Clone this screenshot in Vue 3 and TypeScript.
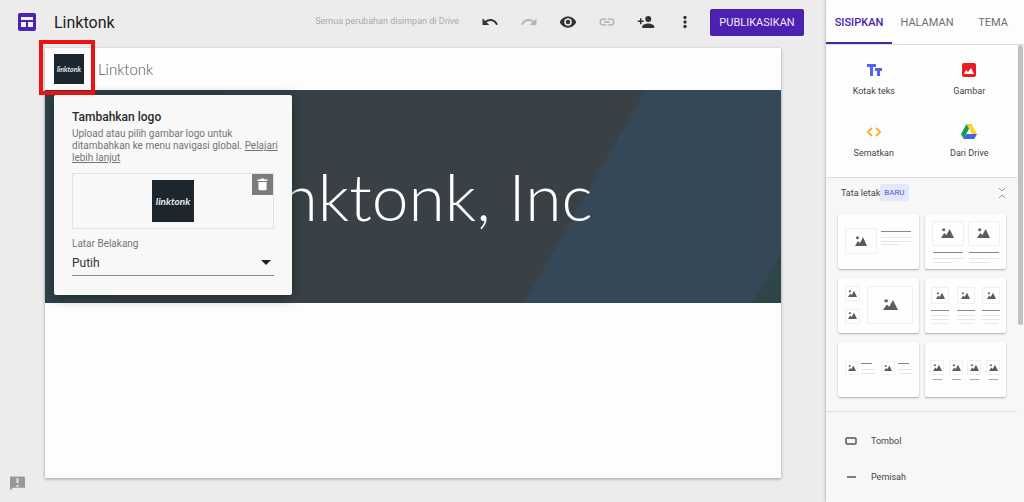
<script setup lang="ts">
import { ref } from 'vue'

type Box = [x: number, y: number, w: number, h: number]
type Stroke = [x: number, y: number, w: number]

interface LayoutTile {
  name: string
  frames: Box[]
  photos: Box[]
  heads: Stroke[]
  lines: Stroke[]
}

const siteName = ref('Linktonk')
const background = ref('Putih')
const tabs = ['SISIPKAN', 'HALAMAN', 'TEMA']
const activeTab = ref('SISIPKAN')

const layouts: LayoutTile[] = [
  {
    name: 'Gambar dan teks',
    frames: [[7, 14, 32, 26]],
    photos: [[17, 22, 12, 10]],
    heads: [[43, 17, 30]],
    lines: [[43, 23, 31], [43, 27, 31], [43, 30, 19]],
  },
  {
    name: 'Dua gambar',
    frames: [[7, 7, 32, 25], [43, 7, 32, 25]],
    photos: [[16, 14, 13, 10], [52, 14, 13, 10]],
    heads: [[8, 38, 30], [44, 38, 30]],
    lines: [[8, 44, 30], [44, 44, 30], [8, 48, 20], [44, 48, 20]],
  },
  {
    name: 'Kolase',
    frames: [[7, 8, 15, 15], [7, 31, 15, 15], [29, 8, 46, 38]],
    photos: [[10, 12, 9, 7], [10, 34, 9, 7], [45, 21, 15, 11]],
    heads: [],
    lines: [],
  },
  {
    name: 'Tiga gambar',
    frames: [[6, 9, 18, 17], [32, 9, 18, 17], [57, 9, 18, 17]],
    photos: [[11, 14, 9, 7], [36, 14, 9, 7], [62, 14, 9, 7]],
    heads: [[6, 32, 18], [32, 32, 18], [57, 32, 18]],
    lines: [[6, 37, 18], [32, 37, 18], [57, 37, 18], [6, 41, 18], [32, 41, 18], [57, 41, 18], [8, 45, 14], [34, 45, 14], [59, 45, 14]],
  },
  {
    name: 'Dua baris',
    frames: [[7, 19, 13, 14], [43, 19, 14, 14]],
    photos: [[10, 23, 8, 6], [46, 23, 8, 6]],
    heads: [[23, 21, 11], [60, 21, 11]],
    lines: [[23, 27, 14], [60, 27, 14], [23, 31, 14], [60, 31, 14]],
  },
  {
    name: 'Empat gambar',
    frames: [[5, 18, 14, 15], [24, 18, 14, 15], [42, 18, 14, 15], [61, 18, 14, 15]],
    photos: [[8, 22, 9, 7], [27, 22, 9, 7], [45, 22, 9, 7], [64, 22, 9, 7]],
    heads: [],
    lines: [[8, 37, 9], [27, 37, 9], [45, 37, 9], [64, 37, 9]],
  },
]
</script>

<template>
  <div class="app">
    <div class="workspace">
      <header class="topbar">
        <svg class="sites-logo" viewBox="0 0 18 18" aria-hidden="true">
          <rect width="18" height="18" rx="2" fill="#4a25ad" />
          <path d="M3 4h12v3H3zM3 9h5v5H3zM10 9h5v5h-5z" fill="#f3f0fa" />
        </svg>
        <input v-model="siteName" class="doc-title" aria-label="Nama situs" />
        <span class="saved">Semua perubahan disimpan di Drive</span>
        <button class="tool" aria-label="Urungkan">
          <svg viewBox="0 0 24 24"><path d="M12.500 8c-2.650 0-5.050.990-6.900 2.600L2 7v9h9l-3.620-3.620c1.390-1.160 3.160-1.880 5.120-1.880 3.540 0 6.550 2.310 7.600 5.500l2.370-.780C21.080 11.030 17.150 8 12.500 8z" /></svg>
        </button>
        <button class="tool faint" aria-label="Ulangi">
          <svg viewBox="0 0 24 24"><path d="M18.400 10.600C16.550 8.990 14.150 8 11.500 8c-4.650 0-8.580 3.030-9.960 7.220L3.900 16c1.050-3.190 4.050-5.500 7.600-5.500 1.950 0 3.730.720 5.120 1.880L13 16h9V7l-3.600 3.600z" /></svg>
        </button>
        <button class="tool" aria-label="Pratinjau">
          <svg viewBox="0 0 24 24"><path d="M12 4.500C7 4.500 2.730 7.610 1 12c1.730 4.390 6 7.500 11 7.500s9.270-3.110 11-7.500c-1.730-4.390-6-7.500-11-7.500zM12 17a5 5 0 1 1 0-10 5 5 0 0 1 0 10zm0-8a3 3 0 1 0 0 6 3 3 0 0 0 0-6z" /></svg>
        </button>
        <button class="tool faint" aria-label="Salin tautan">
          <svg viewBox="0 0 24 24"><path d="M3.900 12c0-1.710 1.390-3.100 3.100-3.100h4V7H7a5 5 0 0 0 0 10h4v-1.900H7c-1.710 0-3.100-1.390-3.100-3.100zM8 13h8v-2H8v2zm9-6h-4v1.900h4a3.100 3.100 0 0 1 0 6.200h-4V17h4a5 5 0 0 0 0-10z" /></svg>
        </button>
        <button class="tool" aria-label="Bagikan">
          <svg viewBox="0 0 24 24"><path d="M15 12a4 4 0 1 0 0-8 4 4 0 0 0 0 8zm-9-2V7H4v3H1v2h3v3h2v-3h3v-2H6zm9 4c-2.670 0-8 1.340-8 4v2h16v-2c0-2.660-5.330-4-8-4z" /></svg>
        </button>
        <button class="tool" aria-label="Lainnya">
          <svg viewBox="0 0 24 24"><circle cx="12" cy="6" r="2.200" /><circle cx="12" cy="12" r="2.200" /><circle cx="12" cy="18" r="2.200" /></svg>
        </button>
        <button class="publish">PUBLIKASIKAN</button>
      </header>

      <main class="page">
        <div class="site-nav">
          <div class="brand-mark">
            <span class="logo logo-small">linktonk</span>
            <span class="highlight"></span>
            <section class="popover" aria-labelledby="logo-heading">
              <h2 id="logo-heading">Tambahkan logo</h2>
              <p>
                Upload atau pilih gambar logo untuk ditambahkan ke menu navigasi global.
                <a href="#">Pelajari lebih lanjut</a>
              </p>
              <div class="preview">
                <span class="logo logo-large">linktonk</span>
                <button class="remove" aria-label="Hapus logo">
                  <svg viewBox="0 0 24 24"><path d="M5.500 8h13v11.500A1.800 1.800 0 0 1 16.700 21H7.300a1.800 1.800 0 0 1-1.800-1.500zM4 4h4.500l1-1.500h5l1 1.500H20v2.500H4z" /></svg>
                </button>
              </div>
              <label for="logo-bg">Latar Belakang</label>
              <div class="select-wrap">
                <select id="logo-bg" v-model="background">
                  <option>Putih</option>
                  <option>Transparan</option>
                  <option>Hitam</option>
                </select>
                <svg class="caret" viewBox="0 0 10 5" aria-hidden="true"><path d="M0 0h10L5 5z" /></svg>
              </div>
            </section>
          </div>
          <span class="site-name">{{ siteName }}</span>
        </div>
        <div class="banner">
          <svg class="banner-art" viewBox="0 0 736 213" preserveAspectRatio="none" aria-hidden="true">
            <rect width="736" height="213" fill="#394147" />
            <path d="M0 0h180L58 213H0z" fill="#314148" />
            <path d="M601 0h135v213H479z" fill="#344857" />
            <path d="M736 164v49h-29z" fill="#2f4648" />
          </svg>
          <h1>Linktonk, Inc</h1>
        </div>
      </main>

      <button class="feedback" aria-label="Laporkan masalah">
        <svg viewBox="0 0 16 15"><path d="M1 0h14a1 1 0 0 1 1 1v11H3l-3 3V1a1 1 0 0 1 1-1z" fill="#999" /><path d="M7 2h2v5H7zM7 9h2v2H7z" fill="#ececec" /></svg>
      </button>
    </div>

    <aside class="sidebar">
      <nav class="tabs">
        <button v-for="tab in tabs" :key="tab" :class="{ active: tab === activeTab }" @click="activeTab = tab">{{ tab }}</button>
      </nav>
      <div class="scroll">
        <div class="inserts">
          <button>
            <svg viewBox="0 0 16 16"><path d="M1 2h9v3H7v9H4V5H1zM9 6h7v3h-2v5h-3V9H9z" fill="#5561f0" /></svg>
            <span>Kotak teks</span>
          </button>
          <button>
            <svg viewBox="0 0 16 16"><rect x="1" y="1" width="14" height="14" rx="2" fill="#ed1c24" /><path d="M3 12l2-4 2 2 3-4 3 6z" fill="#fff" /></svg>
            <span>Gambar</span>
          </button>
          <button>
            <svg viewBox="0 0 16 16"><path d="M6 4L2 8l4 4M10 4l4 4-4 4" fill="none" stroke="#f5b32e" stroke-width="2" /></svg>
            <span>Sematkan</span>
          </button>
          <button>
            <svg viewBox="0 0 16 16"><path d="M5.500 0h5L16 10h-5z" fill="#fbd51d" /><path d="M5.500 0L8 4.700 2.700 15 0 10z" fill="#159d58" /><path d="M5.300 10H16l-2.700 5H2.700z" fill="#4664df" /></svg>
            <span>Dari Drive</span>
          </button>
        </div>

        <section class="layouts">
          <div class="layouts-head">
            <span>Tata letak</span>
            <span class="badge">BARU</span>
            <button class="collapse" aria-label="Ciutkan">
              <svg viewBox="0 0 8 12"><path d="M1 1l3 3 3-3M1 11l3-3 3 3" fill="none" stroke="#999" /></svg>
            </button>
          </div>
          <div class="tiles">
            <button v-for="tile in layouts" :key="tile.name" class="tile" :aria-label="tile.name">
              <svg class="tile-art" viewBox="0 0 81 55">
                <rect v-for="(f, i) in tile.frames" :key="'f' + i" :x="f[0] + 0.5" :y="f[1] + 0.5" :width="f[2] - 1" :height="f[3] - 1" fill="none" stroke="#f0f0f0" />
                <svg v-for="(p, i) in tile.photos" :key="'p' + i" :x="p[0]" :y="p[1]" :width="p[2]" :height="p[3]" viewBox="0 0 12 10" preserveAspectRatio="none">
                  <circle cx="2.500" cy="1.700" r="1.500" fill="#666" />
                  <path d="M0 10l3-5 2 2 3-6 4 9z" fill="#5c5c5c" />
                </svg>
                <rect v-for="(h, i) in tile.heads" :key="'h' + i" :x="h[0]" :y="h[1]" :width="h[2]" height="1" fill="#888" />
                <rect v-for="(l, i) in tile.lines" :key="'l' + i" :x="l[0]" :y="l[1]" :width="l[2]" height="1" :fill="tile.heads.length ? '#e6e6e6' : '#aaa'" />
              </svg>
            </button>
          </div>
        </section>

        <div class="components">
          <button>
            <svg viewBox="0 0 12 12"><rect x="1" y="3" width="10" height="6" rx="1" fill="none" stroke="#555" stroke-width="1.500" /></svg>
            Tombol
          </button>
          <button>
            <svg viewBox="0 0 12 12"><path d="M2 6h9" stroke="#555" stroke-width="1.500" /></svg>
            Pemisah
          </button>
        </div>
        <span class="thumb"></span>
      </div>
    </aside>
  </div>
</template>

<style>
body {
  background: #ececec;
}
</style>

<style scoped>
* {
  box-sizing: border-box;
}
.app {
  display: grid;
  grid-template-columns: minmax(0, 1fr) 198px;
  height: 100vh;
  min-height: 500px;
  overflow: hidden;
  font-family: Roboto, "Liberation Sans", sans-serif;
  color: #444;
}
button {
  border: 0;
  padding: 0;
  background: none;
  font: inherit;
  color: inherit;
  cursor: pointer;
}
svg {
  display: block;
}
.workspace {
  position: relative;
  display: flex;
  flex-direction: column;
  padding: 0 45px 24px;
}
.topbar {
  display: flex;
  align-items: center;
  height: 48px;
  padding-bottom: 4px;
  margin: 0 -23px 0 -27px;
}
.sites-logo {
  width: 18px;
  height: 18px;
  margin-right: 18px;
}
.doc-title {
  flex: 1;
  min-width: 0;
  border: 0;
  padding: 0;
  background: none;
  font: 16px Roboto, sans-serif;
  color: #222;
}
.saved {
  margin-right: 11px;
  padding-bottom: 2px;
  font-size: 9px;
  color: #aaa;
  white-space: nowrap;
}
.tool {
  display: grid;
  place-items: center;
  width: 39px;
  height: 32px;
}
.tool svg {
  width: 18px;
  height: 18px;
  fill: #333;
}
.tool.faint svg {
  fill: #b4b4b4;
}
.publish {
  margin-left: 6px;
  width: 94px;
  height: 27px;
  border-radius: 2px;
  background: #4c20b0;
  color: #eee8fa;
  font-size: 11px;
}
.page {
  flex: 1;
  background: #fdfdfd;
  box-shadow: 0 1px 3px rgba(0, 0, 0, 0.35);
}
.site-nav {
  display: flex;
  align-items: center;
  gap: 14px;
  height: 42px;
  padding-left: 9px;
}
.brand-mark {
  position: relative;
  z-index: 2;
}
.logo {
  display: grid;
  place-items: center;
  background: #1b262e;
  color: #e3e8ea;
  font-family: Lato, sans-serif;
  font-style: italic;
  font-weight: 700;
}
.logo-small {
  width: 30px;
  height: 30px;
  font-size: 7px;
}
.logo-large {
  width: 42px;
  height: 42px;
  font-size: 10px;
}
.highlight {
  position: absolute;
  z-index: 3;
  inset: -14px -11px -11px -15px;
  border: 4px solid #ed1111;
}
.site-name {
  font: 300 15px Lato, sans-serif;
  color: #555;
}
.popover {
  position: absolute;
  top: 41px;
  left: 0;
  width: 238px;
  padding: 14px 18px 19px;
  border-radius: 2px;
  background: #f8f8f8;
  box-shadow: 0 2px 12px rgba(10, 30, 30, 0.6);
}
.popover h2 {
  margin: 0 0 3px;
  font-size: 12px;
  line-height: 16px;
  font-weight: 500;
  color: #2a2a2a;
}
.popover p {
  margin: 0 -10px 9px 0;
  font-size: 10px;
  line-height: 12px;
  color: #757575;
}
.popover a {
  color: inherit;
}
.preview {
  position: relative;
  display: grid;
  place-items: center;
  height: 56px;
  margin-bottom: 8px;
  border: 1px solid #e2e2e2;
}
.remove {
  position: absolute;
  top: 0;
  right: 0;
  display: grid;
  place-items: center;
  width: 21px;
  height: 21px;
  background: #7b7b7b;
}
.remove svg {
  width: 15px;
  height: 15px;
  fill: #fff;
}
.popover label {
  display: block;
  font-size: 10px;
  line-height: 14px;
  color: #757575;
}
.select-wrap {
  position: relative;
}
.select-wrap select {
  display: block;
  width: 100%;
  height: 25px;
  padding: 0;
  border: 0;
  border-bottom: 1px solid #888;
  border-radius: 0;
  appearance: none;
  background: none;
  font: 12px Roboto, sans-serif;
  color: #333;
}
.caret {
  position: absolute;
  top: 9px;
  right: 3px;
  width: 10px;
  height: 5px;
  fill: #222;
  pointer-events: none;
}
.banner {
  position: relative;
  display: grid;
  place-items: center;
  height: 213px;
  padding-bottom: 2px;
}
.banner-art {
  position: absolute;
  inset: 0;
  width: 100%;
  height: 100%;
}
.banner h1 {
  position: relative;
  margin: 0;
  font: 300 66px/78px Lato, sans-serif;
  color: #fff;
}
.feedback {
  position: absolute;
  left: 10px;
  bottom: 11px;
}
.feedback svg {
  width: 15px;
  height: 15px;
}
.sidebar {
  display: flex;
  flex-direction: column;
  min-height: 0;
  background: #f7f7f7;
  box-shadow: 0 0 3px rgba(0, 0, 0, 0.35);
}
.tabs {
  display: grid;
  grid-template-columns: 66px 70px 1fr;
  height: 45px;
  flex: none;
  border-bottom: 1px solid #ddd;
  background: #fdfdfd;
}
.tabs button {
  border-bottom: 2px solid transparent;
  padding-top: 2px;
  font-size: 11px;
  color: #707070;
}
.tabs .active {
  border-color: #4527a0;
  color: #4c20b0;
  font-weight: 500;
}
.scroll {
  position: relative;
  flex: 1;
  min-height: 0;
  overflow: hidden;
  padding-right: 7px;
}
.thumb {
  position: absolute;
  top: 0;
  right: 1px;
  width: 5px;
  height: 280px;
  border-radius: 3px;
  background: #c1c1c1;
}
.inserts {
  display: grid;
  grid-template-columns: 1fr 1fr;
  grid-auto-rows: 62px;
  height: 133px;
  padding-top: 5px;
  background: #fdfdfd;
  border-bottom: 1px solid #ddd;
  font-size: 9px;
}
.inserts button {
  display: flex;
  flex-direction: column;
  align-items: center;
  gap: 7px;
  padding-top: 12px;
  line-height: 12px;
}
.inserts svg {
  width: 16px;
  height: 16px;
}
.layouts {
  padding: 6px 11px 14px 12px;
  border-bottom: 1px solid #ddd;
}
.layouts-head {
  display: flex;
  align-items: center;
  height: 17px;
  margin-bottom: 13px;
  padding-left: 3px;
  font-size: 9px;
}
.badge {
  padding: 0 4px;
  border-radius: 2px;
  background: #e4e6fb;
  color: #5b55c8;
  font-size: 8px;
  line-height: 17px;
}
.collapse {
  margin-left: auto;
}
.collapse svg {
  width: 8px;
  height: 12px;
}
.tiles {
  display: grid;
  grid-template-columns: 1fr 1fr;
  gap: 9px 6px;
}
.tile {
  border-radius: 2px;
  background: #fefefe;
  box-shadow: 0 1px 2px rgba(0, 0, 0, 0.3);
}
.tile-art {
  width: 100%;
}
.components {
  display: grid;
  grid-auto-rows: 36px;
  padding: 11px 19px;
  font-size: 9px;
}
.components button {
  display: flex;
  align-items: center;
  gap: 14px;
}
.components svg {
  width: 12px;
  height: 12px;
}
</style>
